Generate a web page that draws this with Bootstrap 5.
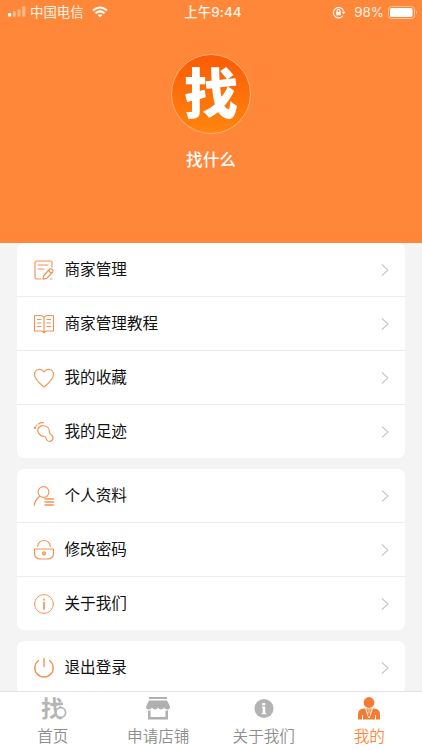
<!DOCTYPE html>
<html lang="zh-CN">
<head>
<meta charset="utf-8">
<meta name="viewport" content="width=device-width, initial-scale=1">
<title>我的</title>
<link href="https://cdn.jsdelivr.net/npm/bootstrap@5.3.0/dist/css/bootstrap.min.css" rel="stylesheet">
<style>
:root{--brand:#ff873a}
body{font-family:"Liberation Sans","Noto Sans CJK SC",sans-serif;background:#f4f4f4;color:#111}
.screen{height:750px}
.profile{height:243px;background:var(--brand)}
.status{height:24px;font-size:13.4px;line-height:24px;font-family:Inter,"Noto Sans CJK SC",sans-serif;color:#fff4e8}
.status>div{flex:1 1 0}
.clock{font-weight:500;letter-spacing:.1px}
.avatar{width:80px;height:80px;margin-top:30px;border:1px solid #ffb07a;background:linear-gradient(#fb5b05,#ff8510);font-size:54px;line-height:1;font-weight:900}
.avatar span{transform:translateY(1px)}
.username{font-size:16.7px;line-height:24px;margin-top:15px;font-weight:500}
.menu-group{margin:0 17px 11px;border-radius:7px;background:#fff;overflow:hidden}
.menu-row{height:54px;padding:0 16px;font-size:15.6px;border-bottom:1px solid #ececec}
.menu-row:last-child{border-bottom:0;height:53px}
.menu-row span{padding-top:1px}
.menu-row .ico{width:22px;height:22px;margin-right:9.500px;fill:none;stroke:#f49256;stroke-width:1.15;stroke-linecap:round;stroke-linejoin:round}
.menu-row .chev{width:8px;height:14px;fill:none;stroke:#c8c8c8;stroke-width:1.1}
.tabs{height:59px;background:#fff;border-top:1px solid #e3e3e3;font-size:15.6px;color:#8d8d8d}
.tabs a{width:25%;color:inherit;padding-top:4px}
.tabs a.current{color:var(--brand)}
.tabs .tab-ico{width:26px;height:26px;overflow:visible}
.tabs .tab-label{line-height:24px;margin-top:3px;font-weight:350}
.tab-word{font:700 23px "Noto Sans CJK SC",sans-serif}
</style>
<script src="https://cdn.jsdelivr.net/npm/bootstrap@5.3.0/dist/js/bootstrap.bundle.min.js"></script>
</head>
<body class="overflow-hidden">
<div class="screen d-flex flex-column overflow-hidden">
  <header class="profile flex-shrink-0 text-white">
    <div class="status d-flex">
      <div class="d-flex align-items-center ps-2">
        <svg width="18" height="12" viewBox="0 0 19 12" fill="#fff"><rect x="0" y="7" width="3.3" height="4" rx="1"/><g opacity=".4"><rect x="5" y="5" width="3.3" height="6" rx="1"/><rect x="10" y="3" width="3.3" height="8" rx="1"/><rect x="15" y="0" width="3.3" height="11" rx="1"/></g></svg>
        <span class="ms-1">中国电信</span>
        <svg class="ms-2" width="16" height="12" viewBox="0 0 16 12" fill="none" stroke="#fff" stroke-width="2"><path d="M1 4.5Q8-1.5 15 4.5M3.5 7.3Q8 3.4 12.5 7.3"/><path d="M5.7 9.1Q8 7.2 10.3 9.1L8 11.5Z" fill="#fff" stroke="none"/></svg>
      </div>
      <div class="clock text-center">上午9:44</div>
      <div class="d-flex align-items-center justify-content-end pe-1">
        <svg width="14" height="13" viewBox="0 0 14 13" fill="none" stroke="#fff" stroke-width="1.1"><path d="M10.8 9.7A5.2 5.2 0 1 1 11.5 5"/><path d="M9.7 5.8h3.8l-1.9 2.4Z" fill="#fff" stroke="none"/><rect x="4.2" y="5.8" width="4.6" height="3.5" fill="#fff" stroke="none"/><path d="M5.1 6V4.7a1.4 1.4 0 0 1 2.8 0V6"/></svg>
        <span class="ms-2">98%</span>
        <svg class="ms-1" width="30" height="13" viewBox="0 0 30 13"><rect x=".5" y=".5" width="26" height="12" rx="3" fill="none" stroke="#ffc29b"/><rect x="2" y="2" width="22.5" height="9" rx="1.5" fill="#fff"/><path d="M28 4.5q2 2 0 4Z" fill="#ffc29b"/></svg>
      </div>
    </div>
    <div class="avatar rounded-circle mx-auto d-flex align-items-center justify-content-center"><span>找</span></div>
    <div class="username text-center">找什么</div>
  </header>

  <main class="flex-grow-1 overflow-hidden">
    <div class="menu-group">
      <div class="menu-row d-flex align-items-center">
        <svg class="ico" viewBox="0 0 22 22"><path d="M19 8V3.5Q19 2 17.5 2H3.5Q2 2 2 3.5v15Q2 20 3.5 20H8M5 6h10M5 10h6"/><path d="m10.5 17 6.2-7q1-.8 2 0l1 1q.9.9 0 2l-6 6.4-3.7.8ZM15.5 11.5l2.8 2.8M17.5 20h1.5"/></svg>
        <span class="flex-grow-1">商家管理</span><svg class="chev" viewBox="0 0 8 14"><path d="m1 1.5 6 5.5-6 5.5"/></svg>
      </div>
      <div class="menu-row d-flex align-items-center">
        <svg class="ico" viewBox="0 0 22 22"><path d="M11 4.5Q9.5 2.500 7.500 2.500h-6v15.500H8q2 0 3 2 1-2 3-2h6.500V2.500h-6q-2 0-3.500 2ZM11 4.500V20M4.500 6.500H8M4.500 10H8M4.500 13.500H8M14 6.500h3.500M14 10h3.500M14 13.500h3.500"/></svg>
        <span class="flex-grow-1">商家管理教程</span><svg class="chev" viewBox="0 0 8 14"><path d="m1 1.5 6 5.5-6 5.500"/></svg>
      </div>
      <div class="menu-row d-flex align-items-center">
        <svg class="ico" viewBox="0 0 22 22"><path d="M11 20Q1.500 12.500 1.500 7.500C1.500 2 8.500.5 11 5c2.500-4.500 9.500-3 9.500 2.500Q20.500 12.500 11 20Z"/></svg>
        <span class="flex-grow-1">我的收藏</span><svg class="chev" viewBox="0 0 8 14"><path d="m1 1.500 6 5.500-6 5.500"/></svg>
      </div>
      <div class="menu-row d-flex align-items-center">
        <svg class="ico" viewBox="0 0 22 22"><path d="M5.200 11.200C3.500 7.500 7 4.400 10.500 4.700c4 .3 6 3 5.800 5.800-.1 2 .7 2.600 2.200 3.500 3.500 2.800.5 7.500-3.500 6-2-1-1.700-3.800-3.500-4.500-2.500-.3-5-1.300-6.300-4.300ZM5.500 3Q8 1.300 10.500 1.800M3.200 4.600l.7-.6"/><circle cx="2" cy="6.800" r=".7"/></svg>
        <span class="flex-grow-1">我的足迹</span><svg class="chev" viewBox="0 0 8 14"><path d="m1 1.500 6 5.500-6 5.500"/></svg>
      </div>
    </div>

    <div class="menu-group">
      <div class="menu-row d-flex align-items-center">
        <svg class="ico" viewBox="0 0 22 22"><circle cx="10.500" cy="7" r="5.400"/><path d="M1.500 20q.3-5.500 5.300-8.500M12 14h8.500M12 17h8.500M12 20h8.500" stroke-width="1.400"/></svg>
        <span class="flex-grow-1">个人资料</span><svg class="chev" viewBox="0 0 8 14"><path d="m1 1.500 6 5.500-6 5.500"/></svg>
      </div>
      <div class="menu-row d-flex align-items-center">
        <svg class="ico" viewBox="0 0 22 22"><path d="M4.700 7.500Q5.500 1.500 11 1.500t6.300 6M1.500 10h19v4q0 6-6 6h-7q-6 0-6-6Z"/><circle cx="11" cy="14.300" r="1.500"/><path d="M11 14v2"/></svg>
        <span class="flex-grow-1">修改密码</span><svg class="chev" viewBox="0 0 8 14"><path d="m1 1.500 6 5.500-6 5.500"/></svg>
      </div>
      <div class="menu-row d-flex align-items-center">
        <svg class="ico" viewBox="0 0 22 22"><circle cx="11" cy="11" r="9.400" stroke-width="1"/><path d="M11 9.500V16M11 6.400v.4" stroke-width="1.700"/></svg>
        <span class="flex-grow-1">关于我们</span><svg class="chev" viewBox="0 0 8 14"><path d="m1 1.500 6 5.500-6 5.500"/></svg>
      </div>
    </div>

    <div class="menu-group">
      <div class="menu-row d-flex align-items-center">
        <svg class="ico" viewBox="0 0 22 22"><path d="M11 1.500v8M5.500 3.500a9.200 9.200 0 1 0 11 0" stroke-width="1.400"/></svg>
        <span class="flex-grow-1">退出登录</span><svg class="chev" viewBox="0 0 8 14"><path d="m1 1.500 6 5.500-6 5.500"/></svg>
      </div>
    </div>
  </main>

  <nav class="tabs d-flex flex-shrink-0 text-center">
    <a class="text-decoration-none d-flex flex-column align-items-center" href="#">
      <svg class="tab-ico" viewBox="0 0 26 26"><text class="tab-word" x="1" y="21" fill="#b5b5b5">找</text><circle cx="20.800" cy="16.500" r="4.800" fill="#fff" stroke="#b5b5b5" stroke-width="1.700"/></svg>
      <span class="tab-label">首页</span>
    </a>
    <a class="text-decoration-none d-flex flex-column align-items-center" href="#">
      <svg class="tab-ico" viewBox="0 0 26 26" fill="#b0b0b0"><path d="M4 1h18v2H4ZM4 4.500h18l3 6q0 3-2.500 3T19 11.500q-.8 2-3 2T13 11.500q-.8 2-3 2t-3-2q-1 2-3.500 2t-2.500-3Z"/><path d="M3 14.500h2.500V21h15v-6.500H23v9H3Z"/></svg>
      <span class="tab-label">申请店铺</span>
    </a>
    <a class="text-decoration-none d-flex flex-column align-items-center" href="#">
      <svg class="tab-ico" viewBox="0 0 26 26"><circle cx="13" cy="12.500" r="9.500" fill="#b3b3b3"/><path d="M11.200 7h3v2.200h-3ZM11 10.500h3.200V17h1v1.300h-4.500V17h1v-5H11Z" fill="#fff"/></svg>
      <span class="tab-label">关于我们</span>
    </a>
    <a class="current text-decoration-none d-flex flex-column align-items-center" href="#">
      <svg class="tab-ico" viewBox="0 0 26 26" fill="#f47c32"><circle cx="13" cy="6.500" r="5.400"/><path d="M2 23.500V18q0-5 6-5.500h10q6 .5 6 5.500v5.500Z"/><path d="M9.500 12.500 13 22l3.500-9.500M6.500 19v4.500M19.500 19v4.500" fill="none" stroke="#fff" stroke-width="1"/><path d="M11.700 13h2.600l-.7 2 .9 4.500L13 21.500l-1.500-2 .9-4.500Z" stroke="#fff" stroke-width=".5"/></svg>
      <span class="tab-label">我的</span>
    </a>
  </nav>
</div>
</body>
</html>
